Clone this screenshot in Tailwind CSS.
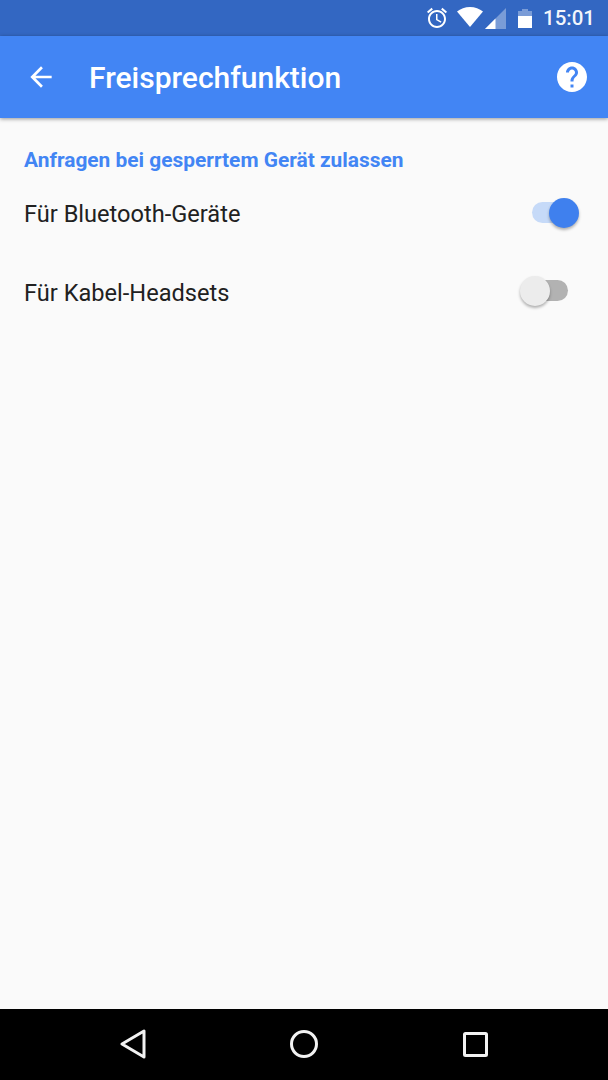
<!DOCTYPE html>
<html lang="de">
<head>
    <meta charset="UTF-8">
    <meta name="viewport" content="width=device-width, initial-scale=1.0">
    <title>Freisprechfunktion</title>
    <script src="https://cdn.jsdelivr.net/npm/@tailwindcss/browser@4"></script>
</head>
<body class="bg-[#fafafa] font-['Roboto',sans-serif]">
    <div class="flex flex-col h-[1080px] w-[608px] overflow-hidden">
        <!-- status bar -->
        <div class="h-[36px] bg-[#3367c2] flex items-center justify-end text-white shrink-0 pr-[13px]">
            <svg class="w-[24px] h-[24px] mr-[8px]" viewBox="0 0 24 24" fill="#fff"><path d="M22 5.72l-4.6-3.86-1.29 1.53 4.6 3.86L22 5.72zM7.88 3.39L6.6 1.86 2 5.71l1.29 1.53 4.59-3.85zM12.5 8H11v6l4.75 2.85.75-1.23-4-2.37V8zM12 4c-4.97 0-9 4.03-9 9s4.03 9 9 9 9-4.03 9-9-4.03-9-9-9zm0 16c-3.87 0-7-3.13-7-7s3.13-7 7-7 7 3.13 7 7-3.13 7-7 7z"/></svg>
            <svg class="w-[26px] h-[20px] mr-[2px] mt-[-2px]" viewBox="0 0 26 20" fill="#fff"><path d="M13 20L0 4.5C3.5 1.8 8 0 13 0s9.500 1.800 13 4.500z"/></svg>
            <svg class="w-[21px] h-[21px] mr-[12px]" viewBox="0 0 22 22"><path d="M0 22L22 0v22z" fill="#fff" fill-opacity="0.35"/><path d="M0 22l11-11v11z" fill="#fff"/></svg>
            <svg class="w-[14px] h-[20px] mr-[11px]" viewBox="0 0 14 20"><path d="M0 3h4V1h6v2h4v17H0z" fill="#fff" fill-opacity="0.35"/><path d="M0 8h14v12H0z" fill="#fff"/></svg>
            <span class="text-[20.5px] leading-none font-medium text-white/95">15:01</span>
        </div>

        <!-- toolbar -->
        <div class="h-[82px] bg-[#4285f4] flex items-center shrink-0 shadow-[0_1px_4px_rgba(0,0,0,0.4)] relative">
            <svg class="w-[32px] h-[32px] ml-[25px]" viewBox="0 0 24 24" fill="#fff"><path d="M20 11H7.830l5.590-5.590L12 4l-8 8 8 8 1.410-1.410L7.830 13H20v-2z"/></svg>
            <h1 class="ml-[32px] mt-[1px] text-[30px] leading-none font-medium text-white">Freisprechfunktion</h1>
            <svg class="w-[36px] h-[36px] ml-auto mr-[18px]" viewBox="0 0 24 24" fill="#fff"><path d="M12 2C6.480 2 2 6.480 2 12s4.480 10 10 10 10-4.480 10-10S17.520 2 12 2zm1 17h-2v-2h2v2zm2.070-7.750l-.9.920C13.450 12.900 13 13.500 13 15h-2v-.5c0-1.100.450-2.100 1.170-2.830l1.240-1.260c.37-.36.590-.86.590-1.410 0-1.100-.9-2-2-2s-2 .9-2 2H8c0-2.210 1.790-4 4-4s4 1.790 4 4c0 .88-.36 1.680-.93 2.250z"/></svg>
        </div>

        <!-- settings list -->
        <main class="flex-1">
            <h2 class="px-[24px] pt-[31px] text-[20.9px] leading-[22px] font-bold text-[#4285f4]">Anfragen bei gesperrtem Gerät zulassen</h2>
            <div class="flex items-center justify-between pl-[24px] pr-[29px] h-[79px] mt-[1px]">
                <span class="mt-[7px] text-[23.6px] text-[#212121]">Für Bluetooth-Geräte</span>
                <div class="relative mt-[2px] w-[47px] h-[30px] flex items-center">
                    <div class="w-[40px] h-[21px] rounded-full bg-[#c6daf8]"></div>
                    <div class="absolute right-0 top-0 w-[30px] h-[30px] rounded-full bg-[#3f80ee] shadow-[0_2px_3px_rgba(0,0,0,0.3)]"></div>
                </div>
            </div>
            <div class="flex items-center justify-between pl-[24px] pr-[40px] h-[79px]">
                <span class="mt-[7px] text-[23.6px] text-[#212121]">Für Kabel-Headsets</span>
                <div class="relative w-[48px] h-[30px] flex items-center">
                    <div class="w-[40px] h-[21px] ml-[8px] rounded-full bg-[#b2b2b2]"></div>
                    <div class="absolute left-0 top-0 w-[30px] h-[30px] rounded-full bg-[#ececec] shadow-[0_2px_3px_rgba(0,0,0,0.3)]"></div>
                </div>
            </div>
        </main>

        <!-- nav bar -->
        <div class="h-[71px] bg-black flex items-center shrink-0 relative">
            <svg class="absolute left-[120px] top-[19px] w-[26px] h-[32px]" viewBox="0 0 26 32" fill="none" stroke="#f2f2f2" stroke-width="3" stroke-linejoin="round"><path d="M24 3v26L2 16z"/></svg>
            <svg class="absolute left-[290px] top-[21px] w-[28px] h-[28px]" viewBox="0 0 28 28" fill="none" stroke="#f2f2f2" stroke-width="3"><circle cx="14" cy="14" r="12.500"/></svg>
            <svg class="absolute left-[463px] top-[23px] w-[25px] h-[25px]" viewBox="0 0 25 25" fill="none" stroke="#f2f2f2" stroke-width="3" stroke-linejoin="round"><rect x="1.500" y="1.500" width="22" height="22" rx="1"/></svg>
        </div>
    </div>
</body>
</html>
